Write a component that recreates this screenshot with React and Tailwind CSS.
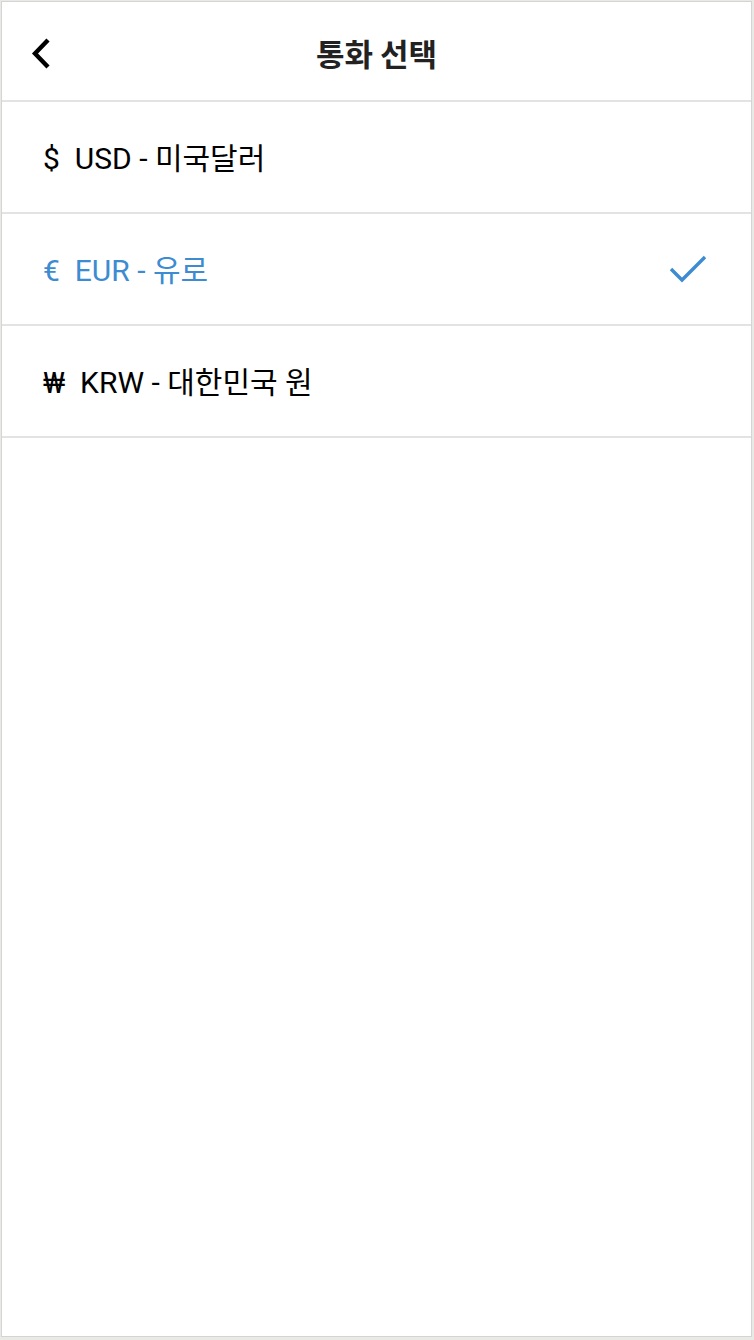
import React from "react";

const font = { fontFamily: "Roboto, 'Noto Sans CJK KR', 'Noto Sans', sans-serif" };

const items = [
  { sym: "$", code: "USD", name: "미국달러", selected: false },
  { sym: "€", code: "EUR", name: "유로", selected: true },
  { sym: "₩", code: "KRW", name: "대한민국 원", selected: false },
];

export default function App() {
  return (
    <div className="h-[1340px] w-[754px] bg-[#e9e9e5] pl-px pt-px" style={font}>
      <div className="h-[1336px] w-[751px] border border-[#d4d4d4] bg-white flex flex-col">
        <div className="relative h-[100px] flex items-center justify-center border-b-2 border-[#e3e3e3]">
          <svg className="absolute left-[28px] top-[34px]" width="24" height="34" viewBox="0 0 24 34">
            <path d="M18 4 L5 17.5 L18 31" fill="none" stroke="#000" strokeWidth="4.4" strokeLinecap="butt" strokeLinejoin="miter" />
          </svg>
          <span className="text-[31px] font-bold text-[#222] leading-none pt-[3px]" style={{ fontFamily: "'Noto Sans CJK KR', sans-serif" }}>통화 선택</span>
        </div>
        {items.map((it) => (
          <div
            key={it.code}
            className={`h-[112px] flex items-center justify-between border-b-2 border-[#e3e3e3] pl-[41px] pr-[44px] ${it.selected ? "text-[#3d8bd1]" : "text-black"}`}
          >
            <span className="text-[30px] leading-none whitespace-pre pt-[3px]">
              {it.sym}{"  "}{it.code} - {it.name}
            </span>
            {it.selected && (
              <svg width="38" height="30" viewBox="0 0 38 30">
                <path d="M2 15 L13 26 L36 3" fill="none" stroke="#3d8bd1" strokeWidth="3.4" />
              </svg>
            )}
          </div>
        ))}
      </div>
    </div>
  );
}
